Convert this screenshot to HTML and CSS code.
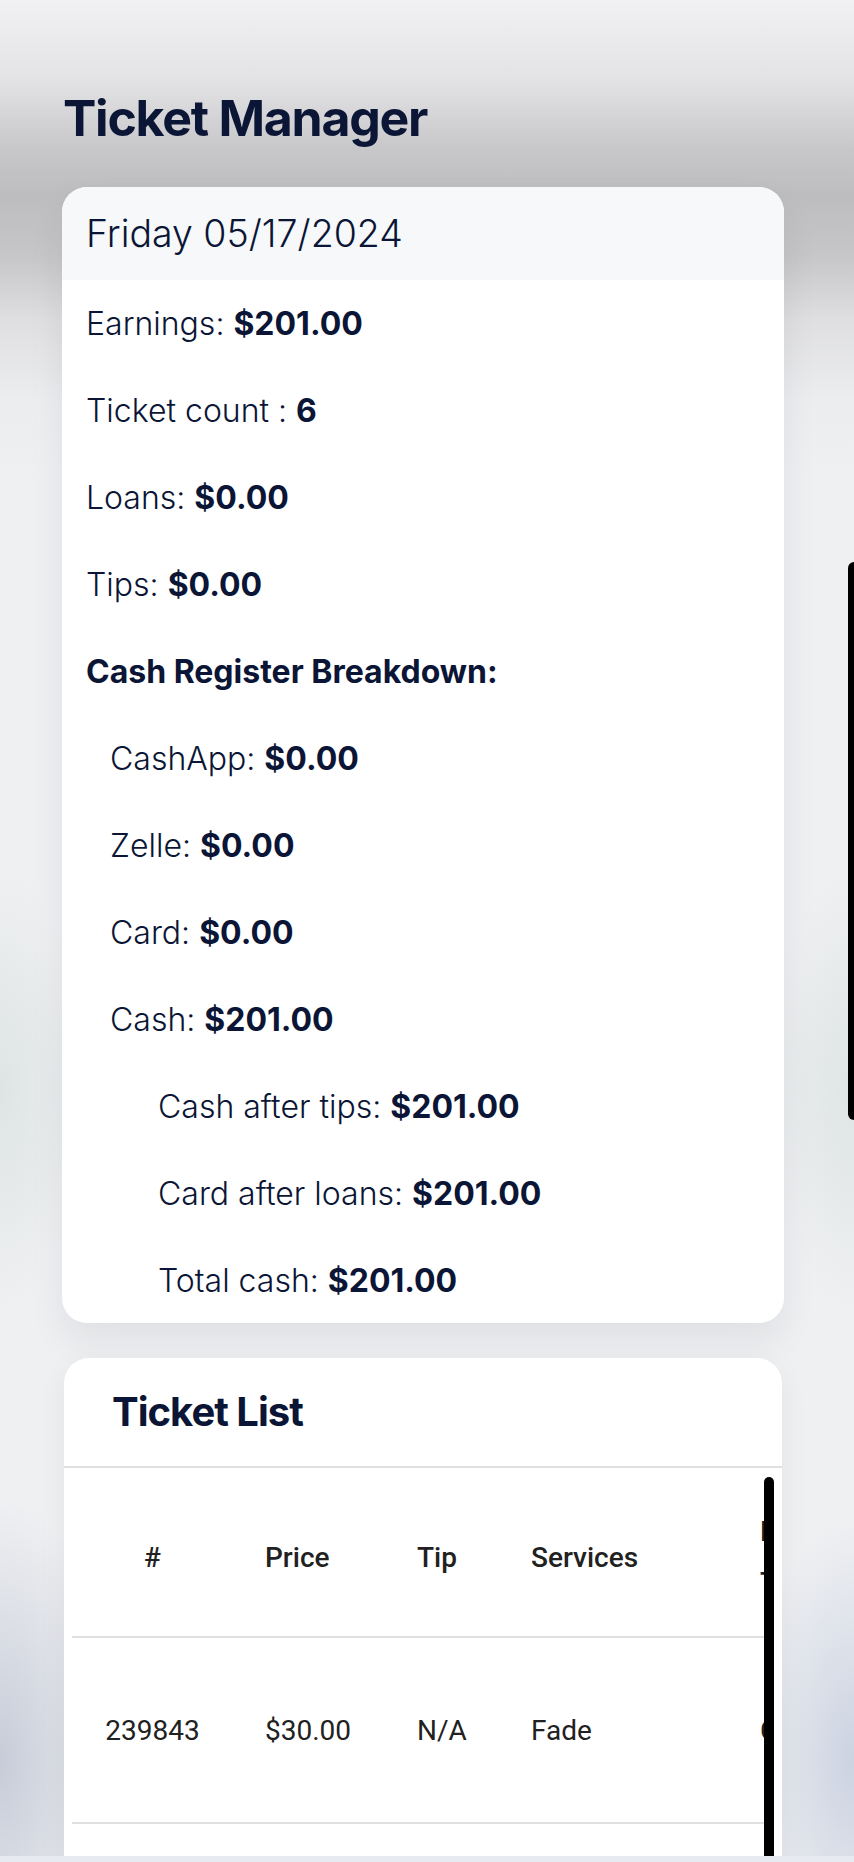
FILE: index.html
```html
<!DOCTYPE html>
<html lang="en">
<head>
    <meta charset="UTF-8">
    <meta name="viewport" content="width=device-width, initial-scale=1.0">
    <title>Ticket Manager</title>
    <link rel="stylesheet" href="styles.css">
</head>
<body>
    <div class="page">
        <h1 class="page-title">Ticket Manager</h1>

        <section class="card summary">
            <div class="summary-head">Friday 05/17/2024</div>
            <div class="summary-body">
                <p>Earnings: <b>$201.00</b></p>
                <p>Ticket count : <b>6</b></p>
                <p>Loans: <b>$0.00</b></p>
                <p>Tips: <b>$0.00</b></p>
                <p><b>Cash Register Breakdown:</b></p>
                <p class="lvl-1">CashApp: <b>$0.00</b></p>
                <p class="lvl-1">Zelle: <b>$0.00</b></p>
                <p class="lvl-1">Card: <b>$0.00</b></p>
                <p class="lvl-1">Cash: <b>$201.00</b></p>
                <p class="lvl-2">Cash after tips: <b>$201.00</b></p>
                <p class="lvl-2">Card after loans: <b>$201.00</b></p>
                <p class="lvl-2">Total cash: <b>$201.00</b></p>
            </div>
        </section>

        <section class="card tickets">
            <h2 class="tickets-title">Ticket List</h2>
            <div class="table-wrap">
                <table class="ticket-table">
                    <colgroup>
                        <col class="c-num">
                        <col class="c-price">
                        <col class="c-tip">
                        <col class="c-services">
                        <col class="c-payment">
                    </colgroup>
                    <thead>
                        <tr>
                            <th class="num">#</th>
                            <th>Price</th>
                            <th>Tip</th>
                            <th>Services</th>
                            <th><div class="two-line">Payment Type</div></th>
                        </tr>
                    </thead>
                    <tbody>
                        <tr>
                            <td class="num">239843</td>
                            <td>$30.00</td>
                            <td>N/A</td>
                            <td>Fade</td>
                            <td>Cash</td>
                        </tr>
                        <tr>
                            <td class="num">239844</td>
                            <td>$35.00</td>
                            <td>N/A</td>
                            <td>Fade</td>
                            <td>Cash</td>
                        </tr>
                    </tbody>
                </table>
                <div class="scroll-thumb"></div>
            </div>
        </section>
    </div>

    <div class="page-thumb"></div>
    <div class="bottom-bar"></div>
</body>
</html>
```

FILE: styles.css
```css
html, body {
    margin: 0;
    height: 1862px;
    overflow: hidden;
}
body {
    position: relative;
    font-family: Inter, "Noto Sans", sans-serif;
    color: #0b1535;
    background-color: #eff0f2;
    background-image:
        radial-gradient(ellipse 120px 260px at 0 1760px, rgba(150, 160, 185, 0.45), rgba(150, 160, 185, 0)),
        radial-gradient(ellipse 110px 240px at 854px 1760px, rgba(160, 175, 205, 0.45), rgba(160, 175, 205, 0)),
        radial-gradient(ellipse 90px 220px at 0 1090px, rgba(190, 205, 200, 0.35), rgba(190, 205, 200, 0)),
        radial-gradient(ellipse 90px 220px at 854px 1090px, rgba(190, 205, 200, 0.35), rgba(190, 205, 200, 0)),
        linear-gradient(180deg, #f1f1f3 0px, #e3e3e5 80px, #c7c7c9 150px, #bdbdbf 195px, #c6c6c8 255px, #dfdfe1 320px, #ecedef 400px, #eff0f2 480px);
}

.page {
    padding: 88px 70px 0 62px;
}

.page-title {
    margin: 0 0 39px 1px;
    font-size: 50px;
    line-height: 60px;
    font-weight: 700;
    letter-spacing: -0.025em;
}

.card {
    background: #fff;
    border-radius: 25px;
    overflow: hidden;
}

/* summary card */
.summary {
    box-shadow: 0 18px 36px rgba(20, 24, 40, 0.07);
}
.summary-head {
    height: 93px;
    padding: 0 24px;
    background: #f7f8fa;
    font-size: 37.5px;
    font-weight: 300;
    line-height: 93px;
}
.summary-body {
    padding: 20px 24px 18px;
}
.summary-body p {
    margin: 0 0 39px;
    font-size: 32px;
    font-weight: 300;
    line-height: 48px;
}
.summary-body p:last-child {
    margin-bottom: 0;
}
.summary-body b {
    font-weight: 700;
}
.lvl-1 { padding-left: 24px; }
.lvl-2 { padding-left: 72px; }

/* ticket list card */
.tickets {
    margin: 35px 2px 0;
    box-shadow: 0 8px 30px rgba(20, 24, 40, 0.06);
}
.tickets-title {
    margin: 0;
    padding-left: 48px;
    height: 108px;
    font-size: 40px;
    line-height: 108px;
    font-weight: 700;
    letter-spacing: -0.025em;
    border-bottom: 2px solid #e0e0e0;
}
.table-wrap {
    position: relative;
    margin: 0 8px;
    height: 600px;
    overflow: hidden;
}
.ticket-table {
    width: 856px;
    table-layout: fixed;
    border-collapse: collapse;
    font-family: Roboto, "Liberation Sans", sans-serif;
    font-size: 28px;
    color: #212121;
}
.c-num { width: 161px; }
.c-price { width: 152px; }
.c-tip { width: 114px; }
.c-services { width: 229px; }
.c-payment { width: 200px; }

.ticket-table th,
.ticket-table td {
    padding: 0 16px 0 32px;
    text-align: left;
    vertical-align: middle;
    white-space: nowrap;
    border-bottom: 2px solid #e0e0e0;
}
.ticket-table th {
    height: 158px;
    padding-top: 10px;
    font-weight: 500;
}
.ticket-table td {
    height: 184px;
}
.ticket-table .num {
    padding: 0 16px;
    text-align: center;
}
.ticket-table th.num {
    padding-top: 10px;
}
.two-line {
    white-space: normal;
    line-height: 51px;
}

.scroll-thumb {
    position: absolute;
    top: 9px;
    right: 0;
    width: 10px;
    height: 560px;
    border-radius: 5px;
    background: #000;
}

.page-thumb {
    position: absolute;
    left: 848px;
    top: 562px;
    width: 12px;
    height: 558px;
    border-radius: 6px;
    background: #000;
}

.bottom-bar {
    position: absolute;
    left: 0;
    right: 0;
    top: 1856px;
    height: 6px;
    background: #e7ebf1;
}
```
